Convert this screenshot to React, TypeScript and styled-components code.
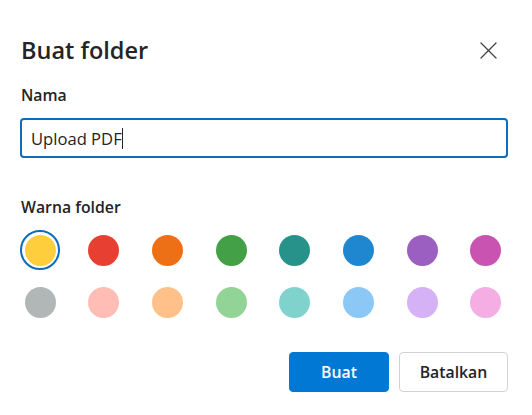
import React from 'react';
import styled, { createGlobalStyle } from 'styled-components';

const GlobalStyle = createGlobalStyle`
  html, body {
    margin: 0;
    padding: 0;
    background: #ffffff;
  }
  body {
    font-family: 'Open Sans', 'Noto Sans', sans-serif;
    color: #242424;
  }
`;

const swatches = [
  ['#ffce3d', '#e74032', '#ee7016', '#43a047', '#26928a', '#1e87d0', '#9b5fc1', '#c853b1'],
  ['#b1b6b7', '#ffbdb5', '#ffc189', '#91d495', '#7fd3cc', '#8bc8f5', '#d5b1f5', '#f5aee4'],
];

const CloseIcon = () => (
  <svg width="17" height="17" viewBox="0 0 17 17" fill="none">
    <path d="M1 1L16 16M16 1L1 16" stroke="#424242" strokeWidth="1.3" strokeLinecap="round" />
  </svg>
);

export default function App() {
  return (
    <>
      <GlobalStyle />
      <Dialog>
        <TitleRow>
          <Title>Buat folder</Title>
          <CloseButton aria-label="Tutup">
            <CloseIcon />
          </CloseButton>
        </TitleRow>
        <Label>Nama</Label>
        <NameInput>
          <span>Upload PDF</span>
          <Caret />
        </NameInput>
        <Label $spaced>Warna folder</Label>
        <SwatchGrid>
          {swatches.flat().map((color, i) => (
            <Swatch key={color} $selected={i === 0}>
              <Dot style={{ background: color }} />
            </Swatch>
          ))}
        </SwatchGrid>
        <Footer>
          <PrimaryButton>Buat</PrimaryButton>
          <SecondaryButton>Batalkan</SecondaryButton>
        </Footer>
      </Dialog>
    </>
  );
}

const Dialog = styled.div`
  width: 532px;
  height: 415px;
  box-sizing: border-box;
  padding: 34px 24px 0 20px;
  display: flex;
  flex-direction: column;
`;

const TitleRow = styled.div`
  display: flex;
  align-items: center;
  justify-content: space-between;
  height: 32px;
`;

const Title = styled.h1`
  margin: 0 0 0 1px;
  font-size: 23.5px;
  line-height: 32px;
  font-weight: 600;
`;

const CloseButton = styled.button`
  border: none;
  background: none;
  padding: 0;
  margin-right: 11px;
  width: 17px;
  height: 17px;
  display: flex;
  cursor: pointer;
`;

const Label = styled.div<{ $spaced?: boolean }>`
  margin: ${p => (p.$spaced ? '38px' : '18px')} 0 12px 1px;
  font-size: 15.8px;
  line-height: 22px;
  font-weight: 600;
`;

const NameInput = styled.div`
  box-sizing: border-box;
  width: 488px;
  height: 40px;
  border: 2px solid #0f6cbd;
  border-radius: 4px;
  padding: 0 9px;
  display: flex;
  align-items: center;
  font-size: 16.6px;
  color: #242424;
`;

const Caret = styled.span`
  display: inline-block;
  width: 1px;
  height: 21px;
  background: #242424;
`;

const SwatchGrid = styled.div`
  display: grid;
  grid-template-columns: repeat(8, 40px);
  column-gap: 23.7px;
  row-gap: 12px;
`;

const Swatch = styled.div<{ $selected?: boolean }>`
  width: 40px;
  height: 40px;
  box-sizing: border-box;
  border-radius: 50%;
  display: flex;
  align-items: center;
  justify-content: center;
  border: 2px solid ${p => (p.$selected ? '#0f6cbd' : 'transparent')};
`;

const Dot = styled.div`
  width: 31px;
  height: 31px;
  border-radius: 50%;
`;

const Footer = styled.div`
  margin-top: 30px;
  display: flex;
  justify-content: flex-end;
  gap: 10px;
`;

const ButtonBase = styled.button`
  height: 40px;
  box-sizing: border-box;
  border-radius: 4px;
  font-family: 'Open Sans', 'Noto Sans', sans-serif;
  font-size: 15.8px;
  font-weight: 600;
  cursor: pointer;
`;

const PrimaryButton = styled(ButtonBase)`
  width: 100px;
  background: #0078d4;
  border: 1px solid #0078d4;
  color: #ffffff;
`;

const SecondaryButton = styled(ButtonBase)`
  width: 109px;
  background: #ffffff;
  border: 1px solid #d1d1d1;
  color: #242424;
`;
